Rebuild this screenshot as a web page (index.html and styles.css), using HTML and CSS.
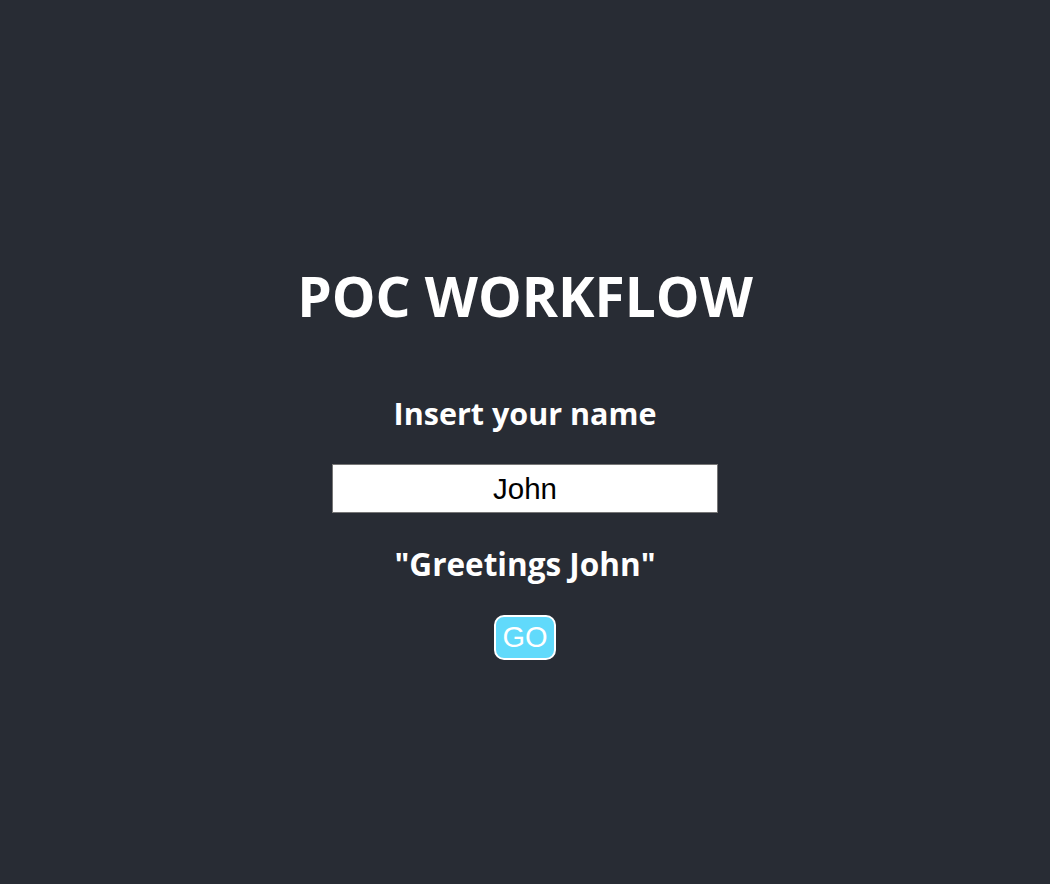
FILE: index.html
```html
<!DOCTYPE html>
<html>
<head>
<meta charset="utf-8">
<link rel="stylesheet" href="styles.css">
</head>
<body>
<div class="app">
  <h1 class="title">POC WORKFLOW</h1>
  <h2 class="label">Insert your name</h2>
  <input class="name-input" type="text" value="John">
  <h2 class="greeting">"Greetings John"</h2>
  <button class="go-btn">GO</button>
</div>
</body>
</html>
```
FILE: styles.css
```css
html, body {
  margin: 0;
  padding: 0;
  background: #282c34;
}
.app {
  min-height: 100vh;
  box-sizing: border-box;
  padding-top: 263px;
  display: flex;
  flex-direction: column;
  align-items: center;
  color: #ffffff;
  font-family: "Open Sans", "DejaVu Sans", sans-serif;
}
.title {
  margin: 0;
  font-size: 55px;
  line-height: 66px;
  font-weight: 700;
}
.label {
  margin: 64px 0 0;
  font-size: 30.5px;
  line-height: 40px;
  font-weight: 700;
}
.name-input {
  margin-top: 31px;
  width: 386px;
  height: 49px;
  box-sizing: border-box;
  border: 1px solid #767676;
  background: #ffffff;
  font-family: "Liberation Sans", Arial, sans-serif;
  font-size: 29.5px;
  text-align: center;
  color: #000;
  padding: 0;
}
.greeting {
  margin: 31px 0 0;
  font-size: 31.5px;
  line-height: 40px;
  font-weight: 700;
}
.go-btn {
  margin-top: 31px;
  width: 62px;
  height: 45px;
  box-sizing: border-box;
  background: #61dafb;
  border: 2px solid #ffffff;
  border-radius: 10px;
  color: #ffffff;
  font-family: "Liberation Sans", Arial, sans-serif;
  font-size: 29px;
  padding: 0;
}
```
